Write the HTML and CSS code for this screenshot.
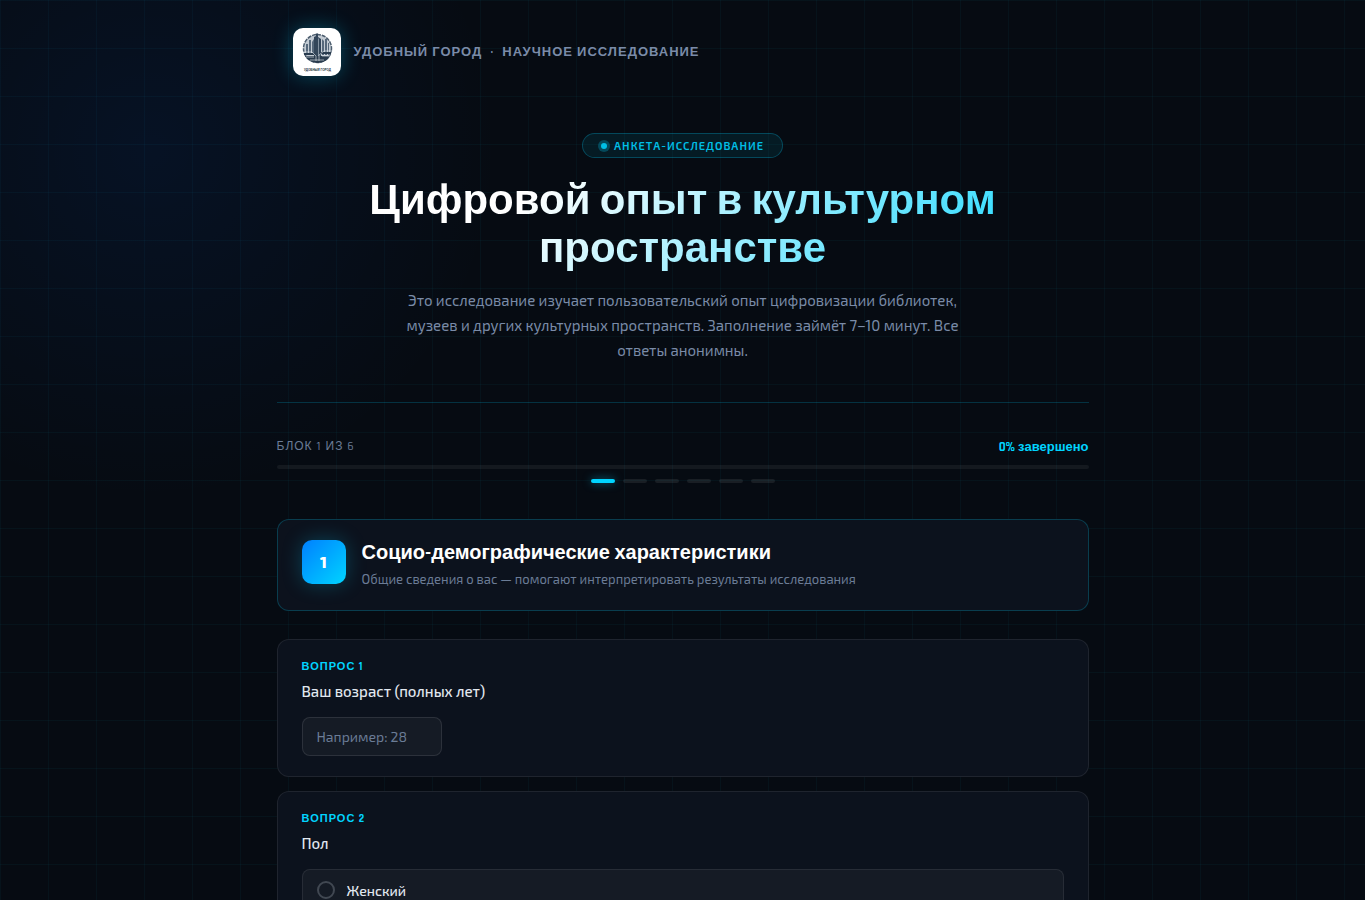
FILE: index.html
```html
<!DOCTYPE html>
<html lang="ru">
<head>
    <meta charset="UTF-8">
    <meta name="viewport" content="width=device-width, initial-scale=1.0">
    <title>Цифровой опыт в культурном пространстве</title>
    <link rel="stylesheet" href="styles.css">
</head>
<body>
    <div class="container">
        <header class="header">
            <div class="logo">
                <svg viewBox="0 0 48 48" width="48" height="48" aria-hidden="true">
                    <circle cx="24.500" cy="20.500" r="14" fill="#c3cbd3"/>
                    <circle cx="24.500" cy="20.500" r="14" fill="none" stroke="#4c5d6e" stroke-width="1.500" stroke-dasharray="4 1"/>
                    <!-- башни -->
                    <path fill="#56687b" d="M13 16h2v11h-2zM16 12h2v15h-2zM19 14l2-3v16h-2zM29 11l2 2v14h-2zM32 11h2v16h-2zM35 15h1v12h-1z"/>
                    <path fill="#33465a" d="M21 9l2-1v-2l1-1 1 1v3l3 2v20h-7z"/>
                    <path fill="#8392a1" d="M25 10l1 1v17h-1z"/>
                    <!-- улицы -->
                    <path fill="#293b4e" d="M11 25h10v2H11zM28 24h10v2H28zM12 28h25c-2 4-7 7-12 7s-11-3-13-7z"/>
                    <path fill="none" stroke="#e8edf2" stroke-width="0.600" d="M10 24h9l4 4v5M39 23h-8l-5 4v6M13 29h8M29 28h8M17 32h14"/>
                    <text x="24.500" y="43" class="logo-text">УДОБНЫЙ ГОРОД</text>
                </svg>
            </div>
            <span class="brand">УДОБНЫЙ ГОРОД &nbsp;·&nbsp; НАУЧНОЕ ИССЛЕДОВАНИЕ</span>
        </header>

        <section class="hero">
            <div class="badge"><span class="badge-dot"></span>АНКЕТА-ИССЛЕДОВАНИЕ</div>
            <h1>Цифровой опыт в культурном пространстве</h1>
            <p>Это исследование изучает пользовательский опыт цифровизации библиотек, музеев и других культурных пространств. Заполнение займёт 7–10 минут. Все ответы анонимны.</p>
        </section>

        <section class="progress">
            <div class="progress-info">
                <span class="progress-label">БЛОК 1 ИЗ 6</span>
                <span class="progress-percent">0% завершено</span>
            </div>
            <div class="progress-bar"></div>
            <div class="steps">
                <span class="step active"></span>
                <span class="step"></span>
                <span class="step"></span>
                <span class="step"></span>
                <span class="step"></span>
                <span class="step"></span>
            </div>
        </section>

        <form>
            <div class="block-header">
                <div class="block-number">1</div>
                <div>
                    <h2>Социо-демографические характеристики</h2>
                    <p>Общие сведения о вас — помогают интерпретировать результаты исследования</p>
                </div>
            </div>

            <div class="question">
                <div class="question-number">ВОПРОС 1</div>
                <label class="question-text" for="age">Ваш возраст (полных лет)</label>
                <input class="age-input" type="number" id="age" name="age" placeholder="Например: 28">
            </div>

            <fieldset class="question">
                <div class="question-number">ВОПРОС 2</div>
                <div class="question-text">Пол</div>
                <label class="option">
                    <input type="radio" name="gender" value="female">
                    <span>Женский</span>
                </label>
            </fieldset>
        </form>
    </div>
</body>
</html>
```

FILE: styles.css
```css
* {
    box-sizing: border-box;
    margin: 0;
    padding: 0;
}
body {
    background-color: #060b12;
    background-image:
        linear-gradient(rgba(0, 212, 255, 0.04) 1px, transparent 1px),
        linear-gradient(90deg, rgba(0, 212, 255, 0.04) 1px, transparent 1px),
        radial-gradient(circle at 150px 150px, rgba(0, 102, 255, 0.08), transparent 350px);
    background-size: 48px 48px, 48px 48px, 100% 100%;
    color: #e2e8f0;
    font-family: "Exo 2", "Noto Sans", sans-serif;
    font-size: 15px;
    min-height: 100vh;
}
.container {
    max-width: 860px;
    margin: 0 auto;
    padding: 0 24px 60px;
}
.header {
    display: flex;
    align-items: center;
    gap: 13px;
    padding: 28px 16px;
}
.logo {
    width: 48px;
    height: 48px;
    background-color: white;
    border-radius: 10px;
    box-shadow: 0 0 20px rgba(0, 212, 255, 0.3);
    overflow: hidden;
}
.logo svg {
    display: block;
}
.logo-text {
    font-family: "Liberation Sans", Arial, sans-serif;
    font-size: 3px;
    font-weight: bold;
    text-anchor: middle;
    fill: #22303e;
}
.brand {
    color: #7a8ba8;
    font-family: "Rajdhani", "Liberation Sans", Arial, sans-serif;
    font-size: 13px;
    font-weight: 600;
    letter-spacing: 1px;
}
.hero {
    text-align: center;
    padding: 29px 0 39px;
    border-bottom: 1px solid rgba(0, 212, 255, 0.2);
}
.badge {
    display: inline-flex;
    align-items: center;
    gap: 7px;
    height: 25px;
    padding: 0 18px;
    background-color: rgba(0, 212, 255, 0.08);
    border: 1px solid rgba(0, 212, 255, 0.25);
    border-radius: 20px;
    color: #00bfe6;
    font-size: 11px;
    font-weight: 600;
    letter-spacing: 1px;
}
.badge-dot {
    width: 6px;
    height: 6px;
    background-color: #00bfe6;
    border-radius: 50%;
    box-shadow: 0 0 0 3px rgba(0, 212, 255, 0.25);
}
.hero h1 {
    margin: 20px 0 14px;
    font-family: "Rajdhani", "Liberation Sans", Arial, sans-serif;
    font-size: 42px;
    font-weight: 700;
    line-height: 48px;
    background: linear-gradient(135deg, #fff 30%, #00d4ff 100%);
    -webkit-background-clip: text;
    background-clip: text;
    color: transparent;
}
.hero p {
    max-width: 560px;
    margin: 0 auto;
    color: #7a8ba8;
    line-height: 25px;
}
.progress {
    padding: 36px 0;
}
.progress-info {
    display: flex;
    justify-content: space-between;
    align-items: center;
    margin-bottom: 10px;
    font-family: "Rajdhani", "Liberation Sans", Arial, sans-serif;
    font-size: 12px;
    line-height: 16px;
}
.progress-label {
    color: #6b7c96;
    font-weight: 500;
    letter-spacing: 1px;
}
.progress-percent {
    color: #00d4ff;
    font-size: 13px;
    font-weight: 700;
}
.progress-bar {
    height: 4px;
    background-color: rgba(255, 255, 255, 0.06);
    border-radius: 2px;
}
.steps {
    display: flex;
    justify-content: center;
    gap: 8px;
    margin-top: 10px;
}
.step {
    width: 24px;
    height: 4px;
    background-color: rgba(255, 255, 255, 0.08);
    border-radius: 2px;
}
.step.active {
    background-color: #00d4ff;
    box-shadow: 0 0 8px rgba(0, 212, 255, 0.5);
}
.block-header {
    display: flex;
    align-items: flex-start;
    gap: 16px;
    margin-bottom: 28px;
    padding: 20px 24px 21px;
    background-color: #0c121d;
    border: 1px solid rgba(0, 212, 255, 0.22);
    border-radius: 12px;
}
.block-number {
    display: flex;
    flex-shrink: 0;
    align-items: center;
    justify-content: center;
    width: 44px;
    height: 44px;
    background: linear-gradient(135deg, #0080ff, #00d4ff);
    border-radius: 10px;
    box-shadow: 0 0 20px rgba(0, 212, 255, 0.25);
    color: white;
    font-weight: 800;
}
.block-header h2 {
    color: white;
    font-family: "Rajdhani", "Liberation Sans", Arial, sans-serif;
    font-size: 20px;
    font-weight: 700;
    line-height: 26px;
}
.block-header p {
    margin-top: 3px;
    color: #6b7c96;
    font-size: 13px;
    line-height: 20px;
}
.question {
    margin-bottom: 14px;
    padding: 20px 24px;
    background-color: #0c121d;
    border: 1px solid rgba(255, 255, 255, 0.08);
    border-radius: 12px;
}
.question-number {
    color: #00d4ff;
    font-family: "Rajdhani", "Liberation Sans", Arial, sans-serif;
    font-size: 11px;
    font-weight: 700;
    letter-spacing: 1px;
    line-height: 14px;
}
.question-text {
    display: block;
    margin: 6px 0 14px;
    font-weight: 500;
    line-height: 23px;
}
.age-input {
    display: block;
    width: 140px;
    height: 39px;
    padding: 0 14px;
    background-color: rgba(255, 255, 255, 0.04);
    border: 1px solid rgba(255, 255, 255, 0.1);
    border-radius: 8px;
    color: #e2e8f0;
    font-family: inherit;
    font-size: 14px;
}
.age-input::placeholder {
    color: #6b7c96;
}
.option {
    display: flex;
    align-items: center;
    gap: 12px;
    height: 42px;
    padding: 0 14px;
    background-color: rgba(255, 255, 255, 0.04);
    border: 1px solid rgba(255, 255, 255, 0.08);
    border-radius: 8px;
    font-size: 14px;
    font-weight: 500;
    cursor: pointer;
}
.option input {
    appearance: none;
    width: 18px;
    height: 18px;
    border: 2px solid #414852;
    border-radius: 50%;
}
.option input:checked {
    border-color: #00d4ff;
    background-color: #00d4ff;
}
```
